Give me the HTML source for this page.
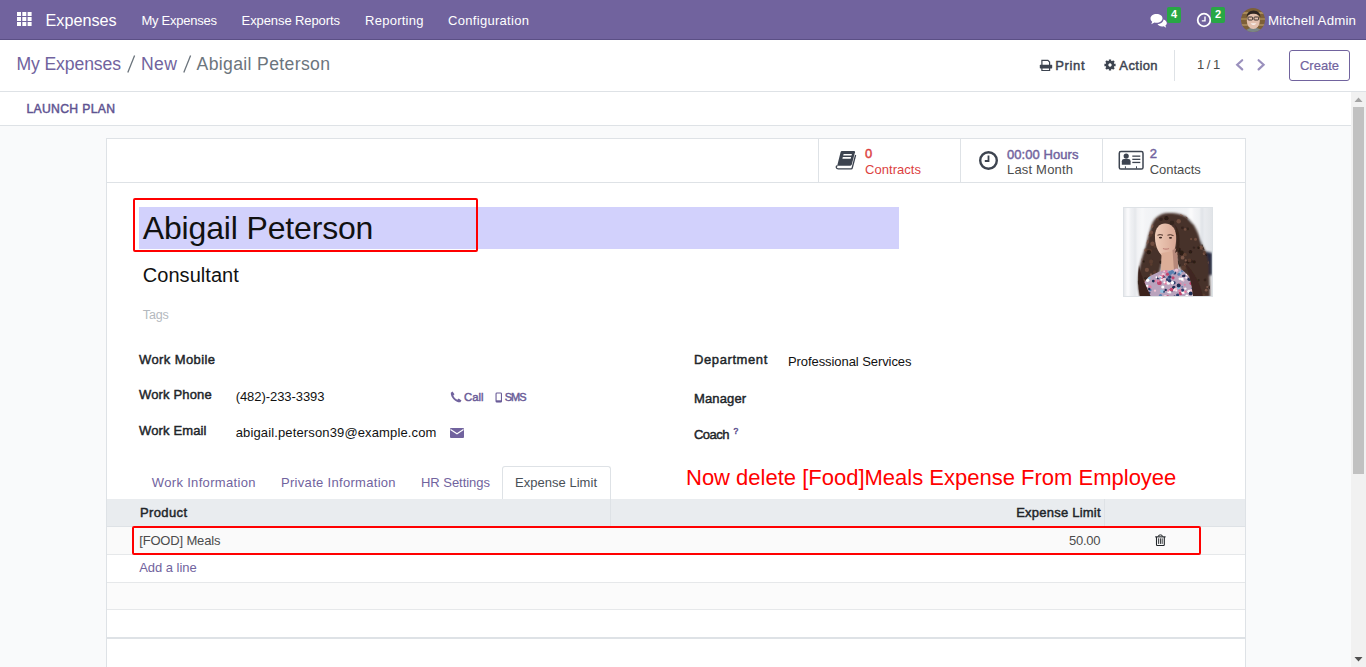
<!DOCTYPE html>
<html><head><meta charset="utf-8"><title>Abigail Peterson</title>
<style>
html,body{margin:0;padding:0;width:1366px;height:667px;overflow:hidden;background:#f9fafb}
body{position:relative;font-family:"Liberation Sans",sans-serif}
.t{position:absolute;line-height:1;white-space:nowrap}
.r{position:absolute;display:block}
</style></head><body>
<div class="r" style="left:0px;top:0px;width:1366px;height:667px;background:#f9fafb"></div>
<div class="r" style="left:0px;top:0px;width:1366px;height:39px;background:#71639e"></div>
<div class="r" style="left:0px;top:39px;width:1366px;height:1px;background:#5b4f85"></div>
<svg class="r" style="left:17px;top:12px" width="15" height="14" viewBox="0 0 15 14"><rect x="0.0" y="0.0" width="4" height="4" fill="#fff"/><rect x="5.3" y="0.0" width="4" height="4" fill="#fff"/><rect x="10.6" y="0.0" width="4" height="4" fill="#fff"/><rect x="0.0" y="5.0" width="4" height="4" fill="#fff"/><rect x="5.3" y="5.0" width="4" height="4" fill="#fff"/><rect x="10.6" y="5.0" width="4" height="4" fill="#fff"/><rect x="0.0" y="10.0" width="4" height="4" fill="#fff"/><rect x="5.3" y="10.0" width="4" height="4" fill="#fff"/><rect x="10.6" y="10.0" width="4" height="4" fill="#fff"/></svg>
<div class="t" style="left:45.50px;top:11.69px;font-size:16.2px;color:#fff;font-weight:400;letter-spacing:0.001px;">Expenses</div>
<div class="t" style="left:141.40px;top:14.00px;font-size:13px;color:#fff;font-weight:400;letter-spacing:-0.245px;">My Expenses</div>
<div class="t" style="left:241.60px;top:14.00px;font-size:13px;color:#fff;font-weight:400;letter-spacing:-0.095px;">Expense Reports</div>
<div class="t" style="left:365.00px;top:14.00px;font-size:13px;color:#fff;font-weight:400;letter-spacing:0.266px;">Reporting</div>
<div class="t" style="left:448.00px;top:14.00px;font-size:13px;color:#fff;font-weight:400;letter-spacing:0.306px;">Configuration</div>
<svg class="r" style="left:1150px;top:12.8px" width="18" height="16" viewBox="0 0 18 16">
<path d="M6.5 1C3 1 0.5 3 0.5 5.5c0 1.3 0.6 2.4 1.7 3.2L1.3 11.3l3.2-1.8c0.6 0.2 1.3 0.3 2 0.3 3.5 0 6-2 6-4.5S10 1 6.5 1z" fill="#fff"/>
<path d="M13.5 6.2c0 2.8-2.8 4.8-6 4.9 0.8 1.4 2.5 2.3 4.5 2.3 0.6 0 1.1-0.1 1.6-0.2l2.6 1.5-0.8-2.2c0.9-0.7 1.4-1.6 1.4-2.6 0-1.5-1.3-2.9-3.3-3.5z" fill="#fff"/>
</svg>
<div class="r" style="left:1167px;top:7px;width:14px;height:16px;background:#28a745;border-radius:2px"></div>
<div class="t" style="left:1174.00px;top:9.19px;font-size:11px;color:#fff;font-weight:700;width:0;text-align:center;display:flex;justify-content:center">4</div>
<svg class="r" style="left:1196px;top:12px" width="16" height="16" viewBox="0 0 16 16">
<circle cx="8" cy="8" r="6.3" fill="none" stroke="#fff" stroke-width="1.8"/>
<path d="M9 4.5V8.9H5.8" fill="none" stroke="#fff" stroke-width="1.4"/>
</svg>
<div class="r" style="left:1211px;top:7px;width:14px;height:16px;background:#28a745;border-radius:2px"></div>
<div class="t" style="left:1218.00px;top:9.19px;font-size:11px;color:#fff;font-weight:700;width:0;text-align:center;display:flex;justify-content:center">2</div>
<svg class="r" style="left:1241px;top:8px" width="24" height="24" viewBox="0 0 24 24">
<defs><clipPath id="av"><circle cx="12" cy="12" r="12"/></clipPath><filter id="avb"><feGaussianBlur stdDeviation="0.6"/></filter></defs>
<g clip-path="url(#av)">
<rect width="24" height="24" fill="#7d6038"/>
<g filter="url(#avb)">
<rect x="0" y="4" width="24" height="2" fill="#a88a58"/><rect x="0" y="10" width="24" height="2" fill="#9c7e4e"/><rect x="0" y="16" width="24" height="2" fill="#a2845a"/>
<path d="M5 22 Q12 17 21 22 L21 24 L5 24z" fill="#7a8686"/>
<ellipse cx="12.3" cy="13" rx="6.5" ry="8" fill="#e2c0ae"/>
<path d="M5.5 9 Q6 2.5 12.5 2.5 Q19 2.5 19.5 9 Q17 5.5 12.5 5.8 Q8 5.5 5.5 9z" fill="#2e2622"/>
<rect x="7" y="9" width="4.6" height="3" rx="0.8" fill="none" stroke="#2e2622" stroke-width="0.9"/><rect x="13" y="9" width="4.6" height="3" rx="0.8" fill="none" stroke="#2e2622" stroke-width="0.9"/>
<path d="M9.5 15.5 Q12.5 18 15.5 15.5z" fill="#fff"/>
</g></g></svg>
<div class="t" style="left:1268.00px;top:13.74px;font-size:13.3px;color:#fff;font-weight:400;letter-spacing:0.174px;">Mitchell Admin</div>
<div class="r" style="left:0px;top:40px;width:1366px;height:51px;background:#fff"></div>
<div class="r" style="left:0px;top:91px;width:1366px;height:1px;background:#dee2e6"></div>
<div class="t" style="left:16.40px;top:55.60px;font-size:17.6px;color:#71639e;font-weight:400;letter-spacing:-0.101px;">My Expenses</div>
<svg class="r" style="left:120px;top:50px" width="80" height="26" viewBox="0 0 80 26"><path d="M7.8 22.4L14.6 5.4M63.8 22.4L70.6 5.4" stroke="#6c757d" stroke-width="1.3" fill="none"/></svg>
<div class="t" style="left:141.00px;top:55.60px;font-size:17.6px;color:#71639e;font-weight:400;letter-spacing:0.398px;">New</div>
<div class="t" style="left:196.60px;top:55.60px;font-size:17.6px;color:#6c757d;font-weight:400;letter-spacing:0.352px;">Abigail Peterson</div>
<svg class="r" style="left:1039px;top:59px" width="14" height="13" viewBox="0 0 14 13">
<path d="M2.9 6V1.4h6l1.7 1.7V6" fill="none" stroke="#3d4450" stroke-width="1.2"/>
<rect x="0.8" y="5.8" width="12.4" height="3.6" rx="0.6" fill="#3d4450"/>
<path d="M2.9 9v2.5h7.7V9" fill="none" stroke="#3d4450" stroke-width="1.2"/>
</svg>
<div class="t" style="left:1055.30px;top:58.80px;font-size:13px;color:#3d4450;font-weight:400;-webkit-text-stroke:0.45px #3d4450;letter-spacing:0.616px;">Print</div>
<svg class="r" style="left:1104.2px;top:59.2px" width="12" height="12" viewBox="0 0 12 12">
<path d="M10.01 4.76 L11.59 4.87 L11.59 7.13 L10.01 7.24 L9.71 7.96 L10.75 9.15 L9.15 10.75 L7.96 9.71 L7.24 10.01 L7.13 11.59 L4.87 11.59 L4.76 10.01 L4.04 9.71 L2.85 10.75 L1.25 9.15 L2.29 7.96 L1.99 7.24 L0.41 7.13 L0.41 4.87 L1.99 4.76 L2.29 4.04 L1.25 2.85 L2.85 1.25 L4.04 2.29 L4.76 1.99 L4.87 0.41 L7.13 0.41 L7.24 1.99 L7.96 2.29 L9.15 1.25 L10.75 2.85 L9.71 4.04z M6 4.3a1.7 1.7 0 1 0 0.01 0z" fill="#3d4450" fill-rule="evenodd"/>
<circle cx="6" cy="6" r="3.3" fill="none" stroke="#3d4450" stroke-width="1.6"/>
</svg>
<div class="t" style="left:1119.30px;top:58.80px;font-size:13px;color:#3d4450;font-weight:400;-webkit-text-stroke:0.45px #3d4450;letter-spacing:0.432px;">Action</div>
<div class="r" style="left:1174px;top:50px;width:1px;height:31px;background:#dee2e6"></div>
<div class="t" style="left:1197.00px;top:58.20px;font-size:13px;color:#4c4c4c;font-weight:400;letter-spacing:-0.499px;">1 / 1</div>
<svg class="r" style="left:1230px;top:54px" width="40" height="20" viewBox="0 0 40 20">
<path d="M12.2 6.2L7.2 10.8l5 4.6" fill="none" stroke="#9a90bd" stroke-width="2.2" stroke-linecap="round"/>
<path d="M28.6 6.2l5 4.6-5 4.6" fill="none" stroke="#9a90bd" stroke-width="2.2" stroke-linecap="round"/>
</svg>
<div class="r" style="left:1289px;top:50px;width:61px;height:31px;border:1px solid #71639e;border-radius:3px;box-sizing:border-box;background:#fff"></div>
<div class="t" style="left:1299.90px;top:59.00px;font-size:13px;color:#71639e;font-weight:400;-webkit-text-stroke:0.2px #71639e;letter-spacing:0.034px;">Create</div>
<div class="r" style="left:0px;top:92px;width:1351px;height:33px;background:#fff"></div>
<div class="r" style="left:0px;top:125px;width:1351px;height:1px;background:#dee2e6"></div>
<div class="t" style="left:26.40px;top:103.17px;font-size:12.2px;color:#5e5391;font-weight:400;-webkit-text-stroke:0.45px #5e5391;letter-spacing:0.326px;">LAUNCH PLAN</div>
<div class="r" style="left:106px;top:138px;width:1140px;height:529px;background:#fff;border:1px solid #dee2e6;border-bottom:none;box-sizing:border-box"></div>
<div class="r" style="left:107px;top:182px;width:1138px;height:1px;background:#dee2e6"></div>
<div class="r" style="left:818px;top:139px;width:1px;height:43px;background:#dee2e6"></div>
<div class="r" style="left:960px;top:139px;width:1px;height:43px;background:#dee2e6"></div>
<div class="r" style="left:1102px;top:139px;width:1px;height:43px;background:#dee2e6"></div>
<svg class="r" style="left:835px;top:150px" width="23" height="21" viewBox="0 0 23 21">
<path d="M6.8 1 H19 Q20.3 1 20 2.2 L16.8 14.6 Q16.5 15.7 15.4 15.7 H2.2 L5.6 2 Q5.9 1 6.8 1z" fill="#3d4450"/>
<path d="M8.6 3.9 H16.9 L16.5 5.5 H8.2z M7.8 7.1 H16.1 L15.7 8.7 H7.4z" fill="#fff"/>
<path d="M2.4 15.6 Q0.9 16.2 1.3 17.6 Q1.7 18.9 3.3 18.9 H16.2 Q17 18.9 17.2 18 L20.6 5" fill="none" stroke="#3d4450" stroke-width="1.3"/>
</svg>
<div class="t" style="left:865.00px;top:147.30px;font-size:13px;color:#dc3f3f;font-weight:400;-webkit-text-stroke:0.45px #dc3f3f;">0</div>
<div class="t" style="left:865.00px;top:162.60px;font-size:13px;color:#dc3f3f;font-weight:400;letter-spacing:0.045px;">Contracts</div>
<svg class="r" style="left:978px;top:150px" width="21" height="21" viewBox="0 0 21 21">
<circle cx="10.5" cy="10.5" r="8.3" fill="none" stroke="#3d4450" stroke-width="2.4"/>
<path d="M10.5 5.5V11H6.8" fill="none" stroke="#3d4450" stroke-width="1.8"/>
</svg>
<div class="t" style="left:1007.00px;top:147.60px;font-size:13px;color:#71639e;font-weight:400;-webkit-text-stroke:0.45px #71639e;letter-spacing:0.057px;">00:00 Hours</div>
<div class="t" style="left:1007.00px;top:162.60px;font-size:13px;color:#4c4c4c;font-weight:400;letter-spacing:0.186px;">Last Month</div>
<svg class="r" style="left:1117px;top:150px" width="27" height="21" viewBox="0 0 27 21">
<rect x="2.3" y="1.55" width="23.7" height="17.55" rx="1.6" fill="none" stroke="#3d4450" stroke-width="1.5"/>
<circle cx="9.2" cy="6.1" r="2.6" fill="#3d4450"/>
<path d="M4.8 14.7 V11.3 Q4.8 9 7 9 H11.4 Q13.6 9 13.6 11.3 V14.7z" fill="#3d4450"/>
<rect x="15.3" y="5.5" width="8" height="1.3" fill="#3d4450"/>
<rect x="15.3" y="8.7" width="8" height="1.3" fill="#3d4450"/>
<rect x="15.3" y="11.8" width="8" height="1.3" fill="#3d4450"/>
<rect x="7.9" y="16.3" width="1" height="2.2" fill="#3d4450"/>
<rect x="19" y="16.3" width="1" height="2.2" fill="#3d4450"/>
</svg>
<div class="t" style="left:1149.70px;top:147.30px;font-size:13px;color:#71639e;font-weight:400;-webkit-text-stroke:0.45px #71639e;">2</div>
<div class="t" style="left:1149.70px;top:162.60px;font-size:13px;color:#4c4c4c;font-weight:400;letter-spacing:-0.030px;">Contacts</div>
<div class="r" style="left:138.7px;top:207px;width:760.3px;height:41.5px;background:#d2d1fc"></div>
<div class="t" style="left:142.80px;top:212.31px;font-size:32px;color:#111;font-weight:400;letter-spacing:-0.162px;">Abigail Peterson</div>
<div class="r" style="left:133px;top:198px;width:345px;height:54px;border:2px solid #ff0000;border-radius:2px;box-sizing:border-box"></div>
<div class="t" style="left:142.80px;top:265.07px;font-size:20px;color:#111;font-weight:400;letter-spacing:0.042px;">Consultant</div>
<div class="t" style="left:142.80px;top:309.22px;font-size:12.5px;color:#b4b9be;font-weight:400;letter-spacing:-0.135px;">Tags</div>
<svg class="r" style="left:1123px;top:207px" width="90" height="90" viewBox="0 0 90 90">
<defs>
<filter id="bl" x="-10%" y="-10%" width="120%" height="120%"><feGaussianBlur stdDeviation="1.0"/></filter>
<filter id="bl2" x="-10%" y="-10%" width="120%" height="120%"><feGaussianBlur stdDeviation="0.55"/></filter>
<clipPath id="hc"><path d="M45 6 C38 6 32 10 29 17 C27 23 25 30 23 38 C20 48 16 58 15 70 C14.5 78 15.5 85 17 90 L31 90 C30 82 32 72 37 64 L39.5 52 L53 50 C55 58 58 64 62 68 L66 90 L87 90 C87 80 86.5 70 86 58 C85 48 80 40 77 32 C74 22 69 13 62 9 C57 6.5 51 6 45 6z"/></clipPath>
<clipPath id="tc"><path d="M17 90 C18 80 22 72 28 68.5 C33 66 38 63.5 43 63 C47 64 50 63 53 61.5 C58 62 63 65 66 70 C69 76 70 84 70.5 90z"/></clipPath>
<linearGradient id="bg" x1="0" x2="1"><stop offset="0" stop-color="#e6e8ec"/><stop offset="0.2" stop-color="#f4f5f7"/><stop offset="0.5" stop-color="#eef0f3"/><stop offset="0.8" stop-color="#f3f4f6"/><stop offset="1" stop-color="#e0e3e7"/></linearGradient>
<linearGradient id="sk" x1="0" x2="1"><stop offset="0" stop-color="#efcdb9"/><stop offset="1" stop-color="#d8a794"/></linearGradient>
</defs>
<rect width="90" height="90" fill="url(#bg)"/>
<g filter="url(#bl)">
<rect x="3" y="0" width="4" height="90" fill="#fafbfc"/><rect x="11" y="0" width="2" height="90" fill="#e1e4e8"/>
<rect x="18" y="0" width="3" height="40" fill="#f7f8f9"/>
<rect x="66" y="0" width="4" height="90" fill="#fbfbfc"/><rect x="78" y="0" width="2" height="50" fill="#dde0e5"/>
<path d="M81 44 L89 46 L89 68 L82 69z" fill="#262b40"/>
<path d="M45 6 C38 6 32 10 29 17 C27 23 25 30 23 38 C20 48 16 58 15 70 C14.5 78 15.5 85 17 90 L31 90 C30 82 32 72 37 64 L39.5 52 L53 50 C55 58 58 64 62 68 L66 90 L87 90 C87 80 86.5 70 86 58 C85 48 80 40 77 32 C74 22 69 13 62 9 C57 6.5 51 6 45 6z" fill="#46302a"/>
</g>
<g filter="url(#bl2)" clip-path="url(#hc)"><circle cx="47.5" cy="52.6" r="1.6" fill="#30201a" opacity="0.8"/><circle cx="77.3" cy="21.1" r="1.7" fill="#8a6252" opacity="0.8"/><circle cx="59.4" cy="20.8" r="1.4" fill="#30201a" opacity="0.8"/><circle cx="20.7" cy="73.8" r="1.8" fill="#7a5444" opacity="0.8"/><circle cx="43.3" cy="43.5" r="1.9" fill="#8a6252" opacity="0.8"/><circle cx="60.1" cy="75.7" r="1.1" fill="#7a5444" opacity="0.8"/><circle cx="28.1" cy="25.6" r="2.1" fill="#7a5444" opacity="0.8"/><circle cx="38.1" cy="55.2" r="1.7" fill="#24150f" opacity="0.8"/><circle cx="61.4" cy="47.5" r="1.6" fill="#7a5444" opacity="0.8"/><circle cx="34.6" cy="89.8" r="2.0" fill="#7a5444" opacity="0.8"/><circle cx="37.3" cy="24.5" r="1.0" fill="#5e3e30" opacity="0.8"/><circle cx="55.7" cy="14.2" r="2.2" fill="#7a5444" opacity="0.8"/><circle cx="42.6" cy="86.4" r="1.3" fill="#7a5444" opacity="0.8"/><circle cx="82.6" cy="9.4" r="2.4" fill="#30201a" opacity="0.8"/><circle cx="43.4" cy="11.2" r="2.1" fill="#24150f" opacity="0.8"/><circle cx="34.0" cy="12.4" r="1.0" fill="#5e3e30" opacity="0.8"/><circle cx="44.3" cy="83.4" r="1.3" fill="#24150f" opacity="0.8"/><circle cx="21.5" cy="10.1" r="1.2" fill="#30201a" opacity="0.8"/><circle cx="55.4" cy="43.0" r="2.4" fill="#24150f" opacity="0.8"/><circle cx="70.9" cy="40.6" r="1.2" fill="#30201a" opacity="0.8"/><circle cx="45.1" cy="23.1" r="2.2" fill="#5e3e30" opacity="0.8"/><circle cx="86.1" cy="55.4" r="1.3" fill="#7a5444" opacity="0.8"/><circle cx="43.2" cy="77.6" r="1.1" fill="#8a6252" opacity="0.8"/><circle cx="87.2" cy="23.1" r="1.0" fill="#5e3e30" opacity="0.8"/><circle cx="59.2" cy="75.6" r="1.1" fill="#30201a" opacity="0.8"/><circle cx="20.7" cy="54.5" r="1.0" fill="#24150f" opacity="0.8"/><circle cx="41.3" cy="57.9" r="2.3" fill="#24150f" opacity="0.8"/><circle cx="49.8" cy="53.8" r="1.3" fill="#30201a" opacity="0.8"/><circle cx="25.4" cy="82.2" r="1.3" fill="#8a6252" opacity="0.8"/><circle cx="28.0" cy="67.9" r="1.3" fill="#8a6252" opacity="0.8"/><circle cx="84.3" cy="80.0" r="1.1" fill="#8a6252" opacity="0.8"/><circle cx="17.5" cy="14.3" r="2.3" fill="#8a6252" opacity="0.8"/><circle cx="31.6" cy="64.9" r="1.6" fill="#5e3e30" opacity="0.8"/><circle cx="81.0" cy="46.7" r="1.2" fill="#8a6252" opacity="0.8"/><circle cx="67.3" cy="10.8" r="1.7" fill="#24150f" opacity="0.8"/><circle cx="62.4" cy="57.3" r="1.4" fill="#7a5444" opacity="0.8"/><circle cx="81.9" cy="22.3" r="1.1" fill="#7a5444" opacity="0.8"/><circle cx="44.4" cy="26.2" r="1.2" fill="#7a5444" opacity="0.8"/><circle cx="41.3" cy="53.6" r="1.1" fill="#24150f" opacity="0.8"/><circle cx="24.2" cy="43.3" r="1.9" fill="#5e3e30" opacity="0.8"/><circle cx="65.2" cy="54.7" r="1.8" fill="#24150f" opacity="0.8"/><circle cx="82.3" cy="45.4" r="2.0" fill="#5e3e30" opacity="0.8"/><circle cx="85.2" cy="6.8" r="1.7" fill="#7a5444" opacity="0.8"/><circle cx="68.1" cy="32.1" r="1.1" fill="#7a5444" opacity="0.8"/><circle cx="54.4" cy="67.6" r="2.1" fill="#24150f" opacity="0.8"/><circle cx="81.7" cy="34.9" r="2.3" fill="#30201a" opacity="0.8"/><circle cx="78.5" cy="40.5" r="2.2" fill="#7a5444" opacity="0.8"/><circle cx="56.4" cy="58.1" r="1.5" fill="#30201a" opacity="0.8"/><circle cx="14.9" cy="11.1" r="1.9" fill="#7a5444" opacity="0.8"/><circle cx="87.5" cy="79.8" r="1.5" fill="#5e3e30" opacity="0.8"/><circle cx="68.4" cy="54.4" r="1.6" fill="#30201a" opacity="0.8"/><circle cx="54.1" cy="49.1" r="1.0" fill="#8a6252" opacity="0.8"/><circle cx="58.5" cy="45.9" r="2.3" fill="#24150f" opacity="0.8"/><circle cx="22.4" cy="71.3" r="1.4" fill="#30201a" opacity="0.8"/><circle cx="14.8" cy="30.6" r="1.3" fill="#8a6252" opacity="0.8"/><circle cx="26.6" cy="82.0" r="1.7" fill="#30201a" opacity="0.8"/><circle cx="31.9" cy="39.4" r="1.3" fill="#5e3e30" opacity="0.8"/><circle cx="45.9" cy="73.5" r="2.2" fill="#24150f" opacity="0.8"/><circle cx="42.4" cy="54.6" r="1.3" fill="#5e3e30" opacity="0.8"/><circle cx="24.0" cy="34.8" r="2.0" fill="#7a5444" opacity="0.8"/><circle cx="84.3" cy="28.5" r="1.2" fill="#24150f" opacity="0.8"/><circle cx="48.9" cy="83.7" r="1.5" fill="#30201a" opacity="0.8"/><circle cx="52.5" cy="62.1" r="1.6" fill="#8a6252" opacity="0.8"/><circle cx="19.5" cy="7.7" r="1.1" fill="#8a6252" opacity="0.8"/><circle cx="66.4" cy="53.5" r="1.9" fill="#5e3e30" opacity="0.8"/><circle cx="55.7" cy="59.5" r="1.6" fill="#30201a" opacity="0.8"/><circle cx="15.8" cy="75.5" r="2.1" fill="#24150f" opacity="0.8"/><circle cx="73.0" cy="88.6" r="1.6" fill="#7a5444" opacity="0.8"/><circle cx="60.6" cy="60.7" r="2.3" fill="#5e3e30" opacity="0.8"/><circle cx="64.7" cy="21.9" r="1.4" fill="#30201a" opacity="0.8"/><circle cx="66.9" cy="69.2" r="2.0" fill="#8a6252" opacity="0.8"/><circle cx="27.3" cy="28.2" r="1.8" fill="#5e3e30" opacity="0.8"/><circle cx="84.1" cy="47.5" r="1.6" fill="#24150f" opacity="0.8"/><circle cx="72.6" cy="82.0" r="1.6" fill="#7a5444" opacity="0.8"/><circle cx="80.1" cy="38.0" r="1.6" fill="#30201a" opacity="0.8"/><circle cx="60.3" cy="82.3" r="1.8" fill="#30201a" opacity="0.8"/><circle cx="62.3" cy="47.7" r="1.6" fill="#5e3e30" opacity="0.8"/><circle cx="62.2" cy="22.4" r="1.3" fill="#7a5444" opacity="0.8"/><circle cx="80.6" cy="88.3" r="1.8" fill="#5e3e30" opacity="0.8"/><circle cx="72.5" cy="32.2" r="1.5" fill="#7a5444" opacity="0.8"/><circle cx="20.1" cy="42.5" r="1.6" fill="#8a6252" opacity="0.8"/><circle cx="34.4" cy="83.2" r="2.1" fill="#24150f" opacity="0.8"/><circle cx="18.7" cy="73.0" r="1.7" fill="#24150f" opacity="0.8"/><circle cx="64.8" cy="82.9" r="1.2" fill="#30201a" opacity="0.8"/><circle cx="52.2" cy="66.5" r="2.3" fill="#30201a" opacity="0.8"/><circle cx="50.5" cy="85.7" r="2.1" fill="#7a5444" opacity="0.8"/><circle cx="46.5" cy="52.5" r="1.9" fill="#8a6252" opacity="0.8"/><circle cx="52.7" cy="76.7" r="1.4" fill="#8a6252" opacity="0.8"/><circle cx="63.7" cy="86.2" r="1.3" fill="#8a6252" opacity="0.8"/><circle cx="77.0" cy="87.3" r="1.4" fill="#8a6252" opacity="0.8"/><circle cx="50.8" cy="39.9" r="1.7" fill="#7a5444" opacity="0.8"/><circle cx="58.8" cy="7.4" r="1.7" fill="#7a5444" opacity="0.8"/><circle cx="43.6" cy="73.1" r="1.2" fill="#8a6252" opacity="0.8"/><circle cx="20.9" cy="19.2" r="1.6" fill="#8a6252" opacity="0.8"/><circle cx="82.1" cy="73.0" r="1.4" fill="#30201a" opacity="0.8"/><circle cx="49.0" cy="15.8" r="2.3" fill="#30201a" opacity="0.8"/><circle cx="83.2" cy="83.2" r="1.4" fill="#8a6252" opacity="0.8"/><circle cx="28.2" cy="57.5" r="1.2" fill="#5e3e30" opacity="0.8"/><circle cx="71.7" cy="6.9" r="1.2" fill="#24150f" opacity="0.8"/><circle cx="14.9" cy="29.1" r="1.3" fill="#5e3e30" opacity="0.8"/><circle cx="50.9" cy="47.5" r="1.2" fill="#8a6252" opacity="0.8"/><circle cx="51.8" cy="26.3" r="2.0" fill="#24150f" opacity="0.8"/><circle cx="79.0" cy="7.0" r="2.2" fill="#30201a" opacity="0.8"/><circle cx="59.6" cy="50.7" r="1.9" fill="#8a6252" opacity="0.8"/><circle cx="53.2" cy="77.4" r="1.8" fill="#8a6252" opacity="0.8"/><circle cx="24.1" cy="82.8" r="2.3" fill="#5e3e30" opacity="0.8"/><circle cx="37.4" cy="31.8" r="1.3" fill="#24150f" opacity="0.8"/><circle cx="87.9" cy="80.4" r="2.2" fill="#24150f" opacity="0.8"/><circle cx="23.8" cy="12.5" r="1.1" fill="#30201a" opacity="0.8"/><circle cx="75.6" cy="40.8" r="1.3" fill="#24150f" opacity="0.8"/><circle cx="60.5" cy="72.9" r="1.3" fill="#7a5444" opacity="0.8"/><circle cx="64.5" cy="82.5" r="1.2" fill="#5e3e30" opacity="0.8"/><circle cx="51.4" cy="69.4" r="2.4" fill="#8a6252" opacity="0.8"/><circle cx="75.6" cy="73.2" r="1.1" fill="#30201a" opacity="0.8"/><circle cx="16.8" cy="51.9" r="2.3" fill="#8a6252" opacity="0.8"/><circle cx="49.6" cy="21.1" r="1.3" fill="#7a5444" opacity="0.8"/><circle cx="76.2" cy="89.2" r="1.8" fill="#7a5444" opacity="0.8"/><circle cx="23.9" cy="62.9" r="2.1" fill="#7a5444" opacity="0.8"/><circle cx="38.2" cy="44.7" r="1.5" fill="#8a6252" opacity="0.8"/><circle cx="29.5" cy="36.7" r="2.2" fill="#7a5444" opacity="0.8"/><circle cx="27.4" cy="43.6" r="1.6" fill="#5e3e30" opacity="0.8"/><circle cx="28.4" cy="19.0" r="2.1" fill="#8a6252" opacity="0.8"/><circle cx="38.0" cy="12.2" r="1.8" fill="#30201a" opacity="0.8"/><circle cx="28.1" cy="54.7" r="2.1" fill="#5e3e30" opacity="0.8"/><circle cx="33.1" cy="82.5" r="2.1" fill="#24150f" opacity="0.8"/><circle cx="44.0" cy="81.2" r="2.0" fill="#8a6252" opacity="0.8"/><circle cx="70.8" cy="70.0" r="1.3" fill="#30201a" opacity="0.8"/><circle cx="27.7" cy="72.8" r="1.7" fill="#5e3e30" opacity="0.8"/><circle cx="14.8" cy="35.2" r="1.1" fill="#8a6252" opacity="0.8"/><circle cx="34.2" cy="86.7" r="1.5" fill="#5e3e30" opacity="0.8"/><circle cx="62.8" cy="53.4" r="1.1" fill="#8a6252" opacity="0.8"/><circle cx="52.1" cy="47.3" r="2.0" fill="#24150f" opacity="0.8"/><circle cx="70.4" cy="88.3" r="1.2" fill="#7a5444" opacity="0.8"/><circle cx="22.0" cy="25.1" r="1.6" fill="#30201a" opacity="0.8"/><circle cx="17.7" cy="21.6" r="1.0" fill="#30201a" opacity="0.8"/><circle cx="33.1" cy="28.4" r="1.8" fill="#5e3e30" opacity="0.8"/><circle cx="51.6" cy="87.2" r="2.2" fill="#8a6252" opacity="0.8"/><circle cx="21.4" cy="42.8" r="1.8" fill="#7a5444" opacity="0.8"/><circle cx="63.5" cy="86.2" r="2.3" fill="#30201a" opacity="0.8"/><circle cx="25.8" cy="45.1" r="2.2" fill="#24150f" opacity="0.8"/><circle cx="54.1" cy="55.7" r="2.3" fill="#30201a" opacity="0.8"/><circle cx="45.1" cy="49.8" r="1.4" fill="#8a6252" opacity="0.8"/><circle cx="53.3" cy="46.1" r="1.8" fill="#5e3e30" opacity="0.8"/><circle cx="35.0" cy="65.9" r="1.0" fill="#5e3e30" opacity="0.8"/><circle cx="71.2" cy="54.8" r="1.6" fill="#24150f" opacity="0.8"/><circle cx="64.6" cy="9.5" r="2.0" fill="#5e3e30" opacity="0.8"/><circle cx="17.7" cy="89.0" r="1.1" fill="#5e3e30" opacity="0.8"/><circle cx="81.0" cy="41.5" r="1.4" fill="#30201a" opacity="0.8"/><circle cx="69.9" cy="8.9" r="2.3" fill="#7a5444" opacity="0.8"/><circle cx="67.5" cy="44.8" r="1.8" fill="#24150f" opacity="0.8"/></g>
<g filter="url(#bl2)">
<path d="M42 16.5 C36.5 16.5 32.5 21 32 28 C31.5 37 34.5 45 39.5 49 C42.5 51 46.5 50.5 49.5 47 C52.5 42.5 53.5 35 53 28 C52.5 21 48 16.5 42 16.5z" fill="url(#sk)"/>
<path d="M38.5 46 L51.5 44 L53.5 64 L38 64z" fill="#dcae98"/>
<path d="M49.5 43 L54 41 L55.5 64 L51 64z" fill="#b6887a"/>
<path d="M34.5 28.2 Q37 27 40 28.2 M44.5 28.2 Q47.5 27 50.5 28.6" stroke="#4a2e25" stroke-width="1" fill="none"/>
<ellipse cx="37.5" cy="30.6" rx="1.6" ry="0.9" fill="#3a2620"/><ellipse cx="47.5" cy="30.8" rx="1.6" ry="0.9" fill="#3a2620"/>
<path d="M40 41.5 Q43 42.8 46 41.5" stroke="#c0827a" stroke-width="1.1" fill="none"/>
<path d="M51 17 C55 23 55 38 52 46 L56 43 C57.5 32 57 22 51 17z" fill="#3b261e"/>
<path d="M17 90 C18 80 22 72 28 68.5 C33 66 38 63.5 43 63 C47 64 50 63 53 61.5 C58 62 63 65 66 70 C69 76 70 84 70.5 90z" fill="#b9a3bd"/>
</g>
<g filter="url(#bl2)" clip-path="url(#tc)"><circle cx="21.4" cy="78.7" r="1.0" fill="#ffffff"/><circle cx="63.2" cy="70.7" r="1.0" fill="#f7f3f6"/><circle cx="39.8" cy="80.0" r="1.6" fill="#ffffff"/><circle cx="50.8" cy="80.5" r="1.8" fill="#1f2d55"/><circle cx="44.7" cy="89.9" r="1.7" fill="#c2446e"/><circle cx="28.4" cy="63.4" r="1.8" fill="#c2446e"/><circle cx="50.0" cy="70.8" r="1.6" fill="#c2446e"/><circle cx="55.6" cy="81.0" r="1.6" fill="#8fc0e0"/><circle cx="57.2" cy="65.7" r="1.5" fill="#8fc0e0"/><circle cx="51.6" cy="65.9" r="1.6" fill="#2c3e6e"/><circle cx="15.5" cy="67.8" r="1.6" fill="#2c3e6e"/><circle cx="20.7" cy="76.2" r="1.7" fill="#e37fa3"/><circle cx="66.1" cy="64.8" r="1.6" fill="#8fc0e0"/><circle cx="35.9" cy="74.4" r="1.3" fill="#8fc0e0"/><circle cx="42.7" cy="64.0" r="1.8" fill="#e37fa3"/><circle cx="40.0" cy="84.7" r="1.4" fill="#8fc0e0"/><circle cx="56.8" cy="71.7" r="1.3" fill="#f7f3f6"/><circle cx="51.6" cy="89.7" r="1.2" fill="#1f2d55"/><circle cx="57.5" cy="84.8" r="1.4" fill="#f7f3f6"/><circle cx="35.7" cy="62.9" r="1.0" fill="#1f2d55"/><circle cx="19.6" cy="76.9" r="1.8" fill="#ffffff"/><circle cx="41.0" cy="84.7" r="1.0" fill="#2c3e6e"/><circle cx="26.9" cy="79.9" r="1.7" fill="#e37fa3"/><circle cx="42.7" cy="82.9" r="1.2" fill="#1f2d55"/><circle cx="23.0" cy="70.7" r="1.3" fill="#1f2d55"/><circle cx="21.6" cy="81.3" r="1.4" fill="#c2446e"/><circle cx="60.0" cy="69.1" r="1.1" fill="#1f2d55"/><circle cx="69.2" cy="81.9" r="1.2" fill="#5a7fb0"/><circle cx="35.3" cy="71.0" r="1.6" fill="#1f2d55"/><circle cx="47.7" cy="83.9" r="1.8" fill="#1f2d55"/><circle cx="45.3" cy="85.1" r="1.1" fill="#f7f3f6"/><circle cx="57.5" cy="86.4" r="1.8" fill="#c2446e"/><circle cx="27.4" cy="61.7" r="1.5" fill="#f7f3f6"/><circle cx="69.1" cy="79.5" r="1.0" fill="#f2c6d6"/><circle cx="45.6" cy="83.6" r="1.3" fill="#e37fa3"/><circle cx="30.3" cy="63.2" r="1.0" fill="#1f2d55"/><circle cx="50.5" cy="64.3" r="1.2" fill="#f2c6d6"/><circle cx="27.3" cy="83.0" r="1.3" fill="#5a7fb0"/><circle cx="40.7" cy="70.5" r="1.6" fill="#1f2d55"/><circle cx="42.6" cy="76.1" r="1.7" fill="#e37fa3"/><circle cx="66.2" cy="72.3" r="1.8" fill="#1f2d55"/><circle cx="60.1" cy="85.0" r="2.0" fill="#ffffff"/><circle cx="50.9" cy="75.7" r="1.8" fill="#2c3e6e"/><circle cx="38.6" cy="72.6" r="1.2" fill="#f7f3f6"/><circle cx="24.1" cy="79.1" r="1.3" fill="#f7f3f6"/><circle cx="36.8" cy="75.9" r="2.0" fill="#c2446e"/><circle cx="18.3" cy="69.3" r="1.2" fill="#e37fa3"/><circle cx="23.7" cy="87.6" r="1.7" fill="#2c3e6e"/><circle cx="16.0" cy="74.4" r="1.2" fill="#2c3e6e"/><circle cx="26.1" cy="70.8" r="1.6" fill="#8fc0e0"/><circle cx="41.4" cy="75.3" r="1.1" fill="#ffffff"/><circle cx="30.7" cy="65.2" r="1.6" fill="#c2446e"/><circle cx="67.8" cy="76.5" r="1.4" fill="#c2446e"/><circle cx="37.5" cy="88.7" r="1.7" fill="#5a7fb0"/><circle cx="20.2" cy="85.9" r="1.0" fill="#f2c6d6"/><circle cx="68.1" cy="84.0" r="2.0" fill="#f2c6d6"/><circle cx="59.5" cy="83.2" r="1.6" fill="#2c3e6e"/><circle cx="28.3" cy="60.3" r="1.9" fill="#ffffff"/><circle cx="40.2" cy="67.4" r="1.6" fill="#f2c6d6"/><circle cx="23.8" cy="64.7" r="1.1" fill="#1f2d55"/><circle cx="65.9" cy="84.3" r="1.6" fill="#f7f3f6"/><circle cx="70.6" cy="68.0" r="1.0" fill="#5a7fb0"/><circle cx="47.0" cy="65.3" r="1.8" fill="#8fc0e0"/><circle cx="62.4" cy="84.7" r="1.3" fill="#e37fa3"/><circle cx="49.4" cy="75.8" r="1.7" fill="#ffffff"/><circle cx="19.6" cy="82.5" r="1.8" fill="#5a7fb0"/><circle cx="32.0" cy="83.7" r="1.1" fill="#f2c6d6"/><circle cx="53.2" cy="83.4" r="1.1" fill="#ffffff"/><circle cx="45.4" cy="75.8" r="1.9" fill="#f7f3f6"/><circle cx="69.0" cy="69.5" r="1.0" fill="#f2c6d6"/><circle cx="32.1" cy="74.0" r="1.3" fill="#e37fa3"/><circle cx="53.5" cy="63.2" r="1.6" fill="#f2c6d6"/><circle cx="56.8" cy="83.5" r="1.6" fill="#e37fa3"/><circle cx="15.7" cy="71.3" r="1.2" fill="#ffffff"/><circle cx="46.6" cy="73.7" r="1.8" fill="#2c3e6e"/><circle cx="62.3" cy="81.6" r="1.2" fill="#f7f3f6"/><circle cx="36.1" cy="76.2" r="1.9" fill="#c2446e"/><circle cx="57.3" cy="76.7" r="1.2" fill="#e37fa3"/><circle cx="26.2" cy="81.9" r="1.2" fill="#1f2d55"/><circle cx="30.3" cy="74.1" r="1.4" fill="#1f2d55"/><circle cx="36.4" cy="63.1" r="1.0" fill="#e37fa3"/><circle cx="50.3" cy="65.4" r="1.3" fill="#8fc0e0"/><circle cx="61.9" cy="77.8" r="1.0" fill="#e37fa3"/><circle cx="16.8" cy="89.6" r="1.3" fill="#f2c6d6"/><circle cx="19.1" cy="87.6" r="1.9" fill="#f2c6d6"/><circle cx="22.8" cy="66.2" r="1.8" fill="#f7f3f6"/><circle cx="36.6" cy="69.9" r="1.6" fill="#f2c6d6"/><circle cx="55.7" cy="78.4" r="2.0" fill="#1f2d55"/><circle cx="59.2" cy="79.8" r="0.9" fill="#5a7fb0"/><circle cx="33.5" cy="70.3" r="1.0" fill="#ffffff"/><circle cx="36.1" cy="75.3" r="1.8" fill="#c2446e"/><circle cx="49.2" cy="64.8" r="1.9" fill="#5a7fb0"/><circle cx="45.7" cy="70.6" r="1.5" fill="#5a7fb0"/><circle cx="47.2" cy="65.9" r="2.0" fill="#5a7fb0"/><circle cx="54.6" cy="88.1" r="1.6" fill="#2c3e6e"/><circle cx="26.1" cy="62.5" r="1.4" fill="#8fc0e0"/><circle cx="38.4" cy="70.0" r="1.9" fill="#e37fa3"/><circle cx="35.2" cy="73.9" r="1.4" fill="#e37fa3"/><circle cx="55.9" cy="67.2" r="1.5" fill="#5a7fb0"/><circle cx="18.6" cy="87.5" r="1.9" fill="#f7f3f6"/><circle cx="70.6" cy="84.5" r="1.0" fill="#f7f3f6"/><circle cx="61.2" cy="68.7" r="1.2" fill="#1f2d55"/><circle cx="47.1" cy="84.9" r="1.6" fill="#f7f3f6"/><circle cx="60.4" cy="73.6" r="1.1" fill="#f2c6d6"/><circle cx="70.3" cy="88.2" r="1.2" fill="#f7f3f6"/><circle cx="52.6" cy="82.1" r="1.6" fill="#f2c6d6"/><circle cx="50.9" cy="82.9" r="1.1" fill="#f7f3f6"/><circle cx="41.2" cy="64.3" r="1.0" fill="#f2c6d6"/><circle cx="37.7" cy="70.1" r="1.2" fill="#f7f3f6"/><circle cx="46.8" cy="70.0" r="1.7" fill="#2c3e6e"/><circle cx="59.1" cy="72.1" r="1.6" fill="#ffffff"/><circle cx="41.3" cy="72.3" r="1.7" fill="#f2c6d6"/><circle cx="42.2" cy="89.8" r="1.8" fill="#f2c6d6"/><circle cx="21.6" cy="63.4" r="1.3" fill="#5a7fb0"/><circle cx="44.2" cy="72.6" r="1.3" fill="#2c3e6e"/><circle cx="18.1" cy="81.8" r="1.7" fill="#f2c6d6"/><circle cx="48.5" cy="82.6" r="1.9" fill="#c2446e"/><circle cx="64.1" cy="67.3" r="1.2" fill="#ffffff"/><circle cx="63.9" cy="89.2" r="1.7" fill="#ffffff"/><circle cx="44.5" cy="67.2" r="1.6" fill="#c2446e"/><circle cx="67.7" cy="86.4" r="1.9" fill="#1f2d55"/><circle cx="38.6" cy="84.2" r="1.6" fill="#8fc0e0"/><circle cx="38.6" cy="63.7" r="1.0" fill="#e37fa3"/><circle cx="59.4" cy="63.7" r="1.5" fill="#5a7fb0"/><circle cx="40.4" cy="68.9" r="0.9" fill="#c2446e"/><circle cx="24.6" cy="73.2" r="1.8" fill="#ffffff"/><circle cx="37.2" cy="70.7" r="1.0" fill="#8fc0e0"/><circle cx="16.7" cy="87.0" r="1.3" fill="#c2446e"/><circle cx="23.0" cy="83.3" r="1.9" fill="#ffffff"/><circle cx="26.4" cy="85.8" r="1.1" fill="#2c3e6e"/></g>
<g filter="url(#bl2)"><path d="M16 58 C18 70 24 80 28 90 L17 90 C15 80 14.5 68 16 58z" fill="#3a241c"/><path d="M62 56 C67 68 69 80 70 90 L80 90 C78 78 71 64 62 56z" fill="#3f2820"/></g>
<rect x="0.5" y="0.5" width="89" height="89" fill="none" stroke="#dee2e6"/>
</svg>
<div class="t" style="left:139.00px;top:352.70px;font-size:13px;color:#212529;font-weight:400;-webkit-text-stroke:0.45px #212529;letter-spacing:0.398px;">Work Mobile</div>
<div class="t" style="left:139.00px;top:387.70px;font-size:13px;color:#212529;font-weight:400;-webkit-text-stroke:0.45px #212529;letter-spacing:0.156px;">Work Phone</div>
<div class="t" style="left:235.70px;top:389.80px;font-size:13px;color:#111;font-weight:400;letter-spacing:-0.063px;">(482)-233-3393</div>
<svg class="r" style="left:450px;top:391px" width="12" height="12" viewBox="0 0 12 12">
<path d="M2.5 0.5 L4.5 3.2 L3.3 4.6 C3.8 6.2 5.5 8 7.3 8.7 L8.7 7.5 L11.5 9.4 L10.3 11.3 C5.5 11.5 0.5 6.5 0.8 1.7z" fill="#71639e"/>
</svg>
<div class="t" style="left:464.00px;top:392.03px;font-size:11.3px;color:#6a5c98;font-weight:400;-webkit-text-stroke:0.45px #6a5c98;letter-spacing:0.044px;">Call</div>
<svg class="r" style="left:495px;top:392px" width="8" height="11" viewBox="0 0 8 11"><rect x="1.05" y="0.95" width="5.4" height="9.1" rx="0.9" fill="none" stroke="#6a5c98" stroke-width="1.1"/><rect x="1" y="8.3" width="5.5" height="1.8" fill="#6a5c98"/></svg>
<div class="t" style="left:504.80px;top:392.29px;font-size:11px;color:#6a5c98;font-weight:400;-webkit-text-stroke:0.45px #6a5c98;letter-spacing:-1.022px;">SMS</div>
<div class="t" style="left:139.00px;top:423.70px;font-size:13px;color:#212529;font-weight:400;-webkit-text-stroke:0.45px #212529;letter-spacing:0.142px;">Work Email</div>
<div class="t" style="left:235.70px;top:425.50px;font-size:13px;color:#111;font-weight:400;letter-spacing:0.136px;">abigail.peterson39@example.com</div>
<svg class="r" style="left:450px;top:428px" width="14" height="10" viewBox="0 0 14 10">
<rect x="0" y="0" width="14" height="10" rx="1" fill="#71639e"/>
<path d="M0.5 1.5 L7 5.8 L13.5 1.5" fill="none" stroke="#fff" stroke-width="1.1"/>
</svg>
<div class="t" style="left:694.00px;top:352.70px;font-size:13px;color:#212529;font-weight:400;-webkit-text-stroke:0.45px #212529;letter-spacing:0.598px;">Department</div>
<div class="t" style="left:788.00px;top:355.00px;font-size:13px;color:#111;font-weight:400;letter-spacing:-0.075px;">Professional Services</div>
<div class="t" style="left:694.00px;top:392.00px;font-size:13px;color:#212529;font-weight:400;-webkit-text-stroke:0.45px #212529;letter-spacing:0.148px;">Manager</div>
<div class="t" style="left:694.00px;top:428.00px;font-size:13px;color:#212529;font-weight:400;-webkit-text-stroke:0.45px #212529;letter-spacing:-0.545px;">Coach</div>
<div class="t" style="left:733.50px;top:427.10px;font-size:8.5px;color:#5e5391;font-weight:400;-webkit-text-stroke:0.45px #5e5391;">?</div>
<div class="r" style="left:502px;top:466px;width:109px;height:34px;background:#fff;border:1px solid #dee2e6;border-bottom:none;border-radius:3px 3px 0 0;box-sizing:border-box"></div>
<div class="t" style="left:151.80px;top:475.70px;font-size:13px;color:#71639e;font-weight:400;letter-spacing:0.330px;">Work Information</div>
<div class="t" style="left:281.00px;top:475.70px;font-size:13px;color:#71639e;font-weight:400;letter-spacing:0.305px;">Private Information</div>
<div class="t" style="left:421.00px;top:475.70px;font-size:13px;color:#71639e;font-weight:400;letter-spacing:-0.037px;">HR Settings</div>
<div class="t" style="left:515.00px;top:476.00px;font-size:13px;color:#495057;font-weight:400;letter-spacing:0.029px;">Expense Limit</div>
<div class="t" style="left:686.00px;top:466.88px;font-size:22px;color:#ff0000;font-weight:400;">Now delete [Food]Meals Expense From Employee</div>
<div class="r" style="left:107px;top:499px;width:1138px;height:27px;background:#e9ecef"></div>
<div class="r" style="left:610px;top:499px;width:1px;height:27px;background:#dee2e6"></div>
<div class="r" style="left:1104px;top:499px;width:1px;height:27px;background:#dee2e6"></div>
<div class="t" style="left:140.00px;top:505.60px;font-size:13px;color:#212529;font-weight:400;-webkit-text-stroke:0.45px #212529;letter-spacing:0.365px;">Product</div>
<div class="t" style="left:1016.20px;top:506.00px;font-size:13px;color:#212529;font-weight:400;-webkit-text-stroke:0.45px #212529;letter-spacing:0.229px;">Expense Limit</div>
<div class="r" style="left:107px;top:526px;width:1138px;height:1px;background:#dee2e6"></div>
<div class="r" style="left:107px;top:527px;width:1138px;height:27px;background:#fafafa"></div>
<div class="r" style="left:107px;top:554px;width:1138px;height:1px;background:#e6e8ea"></div>
<div class="t" style="left:139.20px;top:533.80px;font-size:13px;color:#4c4c4c;font-weight:400;letter-spacing:-0.162px;">[FOOD] Meals</div>
<div class="t" style="left:1069.00px;top:533.80px;font-size:13px;color:#4c4c4c;font-weight:400;letter-spacing:-0.237px;">50.00</div>
<svg class="r" style="left:1155px;top:534px" width="11" height="12" viewBox="0 0 11 12">
<path d="M3.2 2.6 Q3.2 0.9 5.4 0.9 Q7.6 0.9 7.6 2.6" fill="none" stroke="#212529" stroke-width="1"/>
<rect x="0.2" y="2.3" width="10.4" height="1.1" fill="#212529"/>
<path d="M1.5 3 V10.7 Q1.5 11.5 2.3 11.5 H8.5 Q9.3 11.5 9.3 10.7 V3" fill="none" stroke="#212529" stroke-width="1.1"/>
<rect x="3.2" y="4.3" width="0.9" height="5.6" fill="#212529"/>
<rect x="4.95" y="4.3" width="0.9" height="5.6" fill="#212529"/>
<rect x="6.7" y="4.3" width="0.9" height="5.6" fill="#212529"/>
</svg>
<div class="r" style="left:132px;top:526px;width:1069px;height:29px;border:2px solid #ff0000;border-radius:2px;box-sizing:border-box"></div>
<div class="t" style="left:139.20px;top:560.90px;font-size:13px;color:#71639e;font-weight:400;letter-spacing:-0.036px;">Add a line</div>
<div class="r" style="left:107px;top:582px;width:1138px;height:1px;background:#e6e8ea"></div>
<div class="r" style="left:107px;top:583px;width:1138px;height:26px;background:#fbfbfb"></div>
<div class="r" style="left:107px;top:609px;width:1138px;height:1px;background:#e6e8ea"></div>
<div class="r" style="left:107px;top:637px;width:1138px;height:2px;background:#dee2e6"></div>
<div class="r" style="left:1351px;top:92px;width:15px;height:575px;background:#f1f1f1"></div>
<div class="r" style="left:1353px;top:107px;width:11px;height:367px;background:#c1c1c1"></div>
<svg class="r" style="left:1351px;top:92px" width="15" height="15" viewBox="0 0 15 15"><path d="M3.5 10 L7.5 5.5 L11.5 10z" fill="#a3a3a3"/></svg>
<svg class="r" style="left:1351px;top:652px" width="15" height="15" viewBox="0 0 15 15"><path d="M3.5 5 L7.5 9.5 L11.5 5z" fill="#505050"/></svg>
</body></html>
